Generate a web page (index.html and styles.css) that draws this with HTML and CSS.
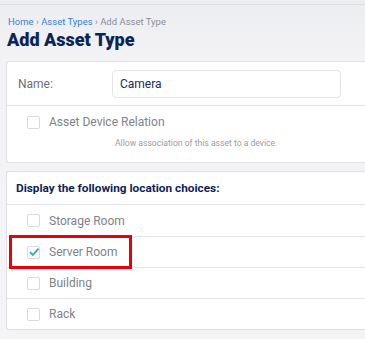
FILE: index.html
```html
<html>
	<head>
		<link rel="stylesheet" href="styles.css">
	</head>
	<body>
		<div class="Page">
			<div class="Crumbs">
				<a href="#">Home</a> <span class="Sep">›</span> <a href="#">Asset Types</a> <span class="Sep">›</span> <span class="Here">Add Asset Type</span>
			</div>
			<h1 class="Title">Add Asset Type</h1>

			<div class="Card">
				<div class="Row NameRow">
					<label class="FieldLabel">Name:</label>
					<div class="Input">Camera</div>
				</div>
				<div class="Row CheckRow">
					<div class="Check"><span class="Box"></span> Asset Device Relation</div>
					<div class="Help">Allow association of this asset to a device.</div>
				</div>
			</div>

			<div class="Card Choices">
				<div class="CardHead">Display the following location choices:</div>
				<div class="Choice"><span class="Box"></span> Storage Room</div>
				<div class="Choice Marked">
					<span class="Box Checked">
						<svg width="12" height="12" viewBox="0 0 12 12"><path d="M2 6.2 L4.8 9 L10.5 2.6" fill="none" stroke="#22b0b8" stroke-width="1.8"/></svg>
					</span> Server Room
				</div>
				<div class="Choice"><span class="Box"></span> Building</div>
				<div class="Choice"><span class="Box"></span> Rack</div>
			</div>
		</div>
	</body>
</html>
```

FILE: styles.css
```css
body{
	margin: 0;
	background: linear-gradient(#ecedf1, #f3f3f5 60px, #f4f4f6);
	font-family: Roboto, "Liberation Sans", sans-serif;
	height: 339px;
	overflow: hidden;
}
.Page{
	margin-top: 4px;
	border-top: 1px solid #dcdde2;
	padding: 11px 0 0 6px;
}
.Crumbs{
	font-size: 9.5px;
	color: #8a8d96;
	padding-left: 2px;
	line-height: 12px;
}
.Crumbs a{
	color: #3a7fd6;
	text-decoration: none;
}
.Crumbs .Sep{
	color: #8a8d96;
}
.Title{
	margin: 1px 0 0 1px;
	font-size: 18px;
	font-weight: 900;
	color: #0c2558;
	line-height: 22px;
}
.Card{
	background: #fff;
	border: 1px solid #dedfe3;
	border-right: none;
	border-radius: 3px 0 0 3px;
	margin-top: 10px;
}
.Row{
	border-bottom: 1px solid #e2e3e6;
}
.Row:last-child{
	border-bottom: none;
}
.NameRow{
	display: flex;
	align-items: center;
	height: 43px;
}
.FieldLabel{
	width: 94px;
	padding-left: 11px;
	font-size: 12px;
	color: #6d7079;
}
.Input{
	width: 220px;
	height: 26px;
	border: 1px solid #e3e4e7;
	border-radius: 4px;
	padding-left: 7px;
	font-size: 12px;
	line-height: 26px;
	color: #1a2a5a;
}
.CheckRow{
	height: 56px;
	padding-top: 1px;
	box-sizing: border-box;
}
.Check, .Choice{
	display: flex;
	align-items: center;
	font-size: 12px;
	color: #80838b;
	padding-left: 20px;
}
.Check{
	height: 30px;
}
.Box{
	display: inline-flex;
	align-items: center;
	justify-content: center;
	width: 11px;
	height: 11px;
	border: 1px solid #d9dadd;
	border-radius: 2px;
	margin-right: 9px;
	background: #fff;
}
.Box svg{
	flex: none;
}
.Help{
	font-size: 8.6px;
	color: #9a9ca3;
	padding-left: 108px;
	margin-top: 1px;
}
.Choices{
	margin-top: 8px;
	position: relative;
}
.CardHead{
	height: 32px;
	line-height: 32px;
	padding-left: 9px;
	font-size: 11.8px;
	font-weight: 700;
	color: #0c2558;
	border-bottom: 1px solid #e2e3e6;
}
.Choice{
	height: 30px;
	border-bottom: 1px solid #e2e3e6;
}
.Choice:nth-child(2){
	height: 31px;
}
.Choice:last-child{
	border-bottom: none;
}
.Marked{
	position: relative;
}
.Marked::after{
	content: "";
	position: absolute;
	left: 2px;
	top: -2px;
	width: 117px;
	height: 28px;
	border: 3px solid #e8000d;
}
```
